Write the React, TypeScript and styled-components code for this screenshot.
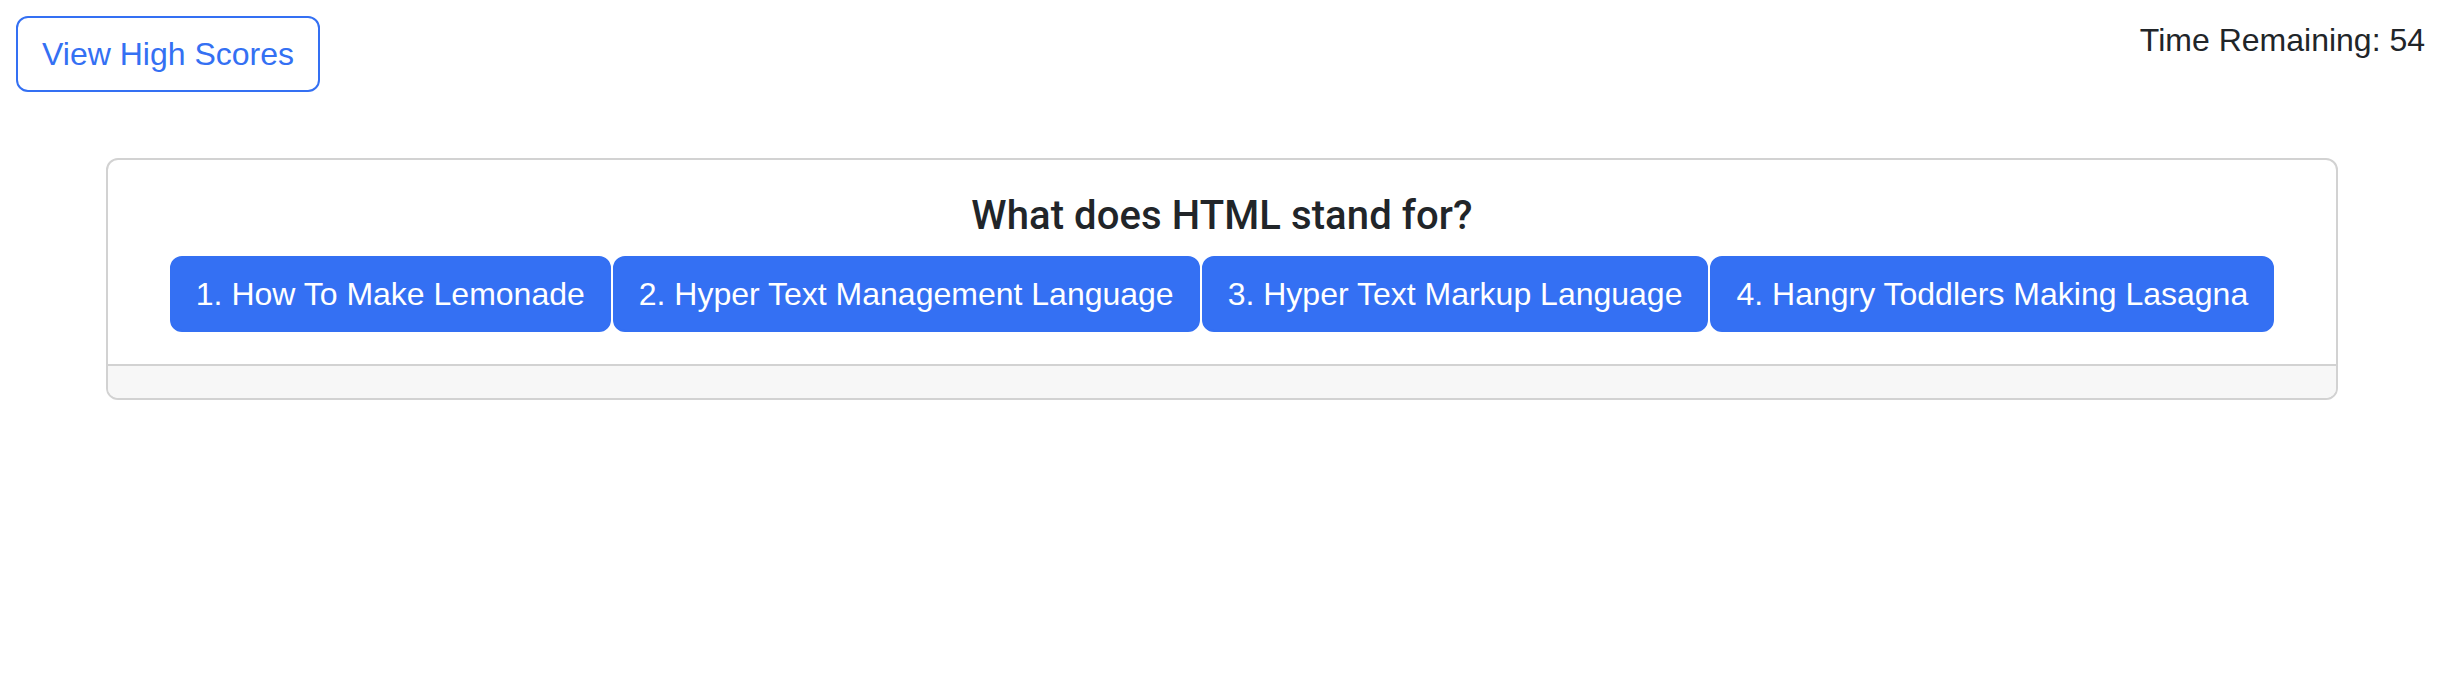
import React from "react";
import styled, { createGlobalStyle } from "styled-components";

const GlobalStyle = createGlobalStyle`
  html, body {
    margin: 0;
    padding: 0;
    background: #ffffff;
  }
  body {
    font-family: "Liberation Sans", Arial, sans-serif;
    color: #212529;
  }
  * { box-sizing: border-box; }
`;

const Page = styled.div`
  width: 2448px;
  min-height: 694px;
  background: #ffffff;
`;

const Header = styled.header`
  display: flex;
  justify-content: space-between;
  align-items: flex-start;
  padding: 16px 23px 0 16px;
`;

const OutlineButton = styled.button`
  font-family: "Liberation Sans", Arial, sans-serif;
  font-size: 32px;
  line-height: 48px;
  padding: 12px 24px;
  border: 2px solid #3470f3;
  border-radius: 12px;
  background: #ffffff;
  color: #3470f3;
  cursor: pointer;
`;

const Timer = styled.div`
  font-size: 32px;
  line-height: 48px;
  color: #212529;
`;

const Card = styled.section`
  margin: 66px 110px 0 106px;
  border: 2px solid #d2d2d2;
  border-radius: 12px;
  overflow: hidden;
  background: #ffffff;
`;

const CardBody = styled.div`
  padding: 32px;
  display: flex;
  flex-direction: column;
  align-items: center;
`;

const Question = styled.h5`
  margin: 0 0 16px;
  font-family: Roboto, "Liberation Sans", Arial, sans-serif;
  font-size: 40px;
  line-height: 48px;
  font-weight: 500;
  letter-spacing: 0.1px;
  color: #212529;
`;

const Choices = styled.div`
  display: flex;
  justify-content: center;
  gap: 2px;
`;

const ChoiceButton = styled.button`
  font-family: "Liberation Sans", Arial, sans-serif;
  font-size: 32px;
  line-height: 48px;
  padding: 12px 24px;
  border: 2px solid #3470f3;
  border-radius: 12px;
  background: #3470f3;
  color: #ffffff;
  white-space: nowrap;
  cursor: pointer;
`;

const CardFooter = styled.div`
  height: 34px;
  border-top: 2px solid #d2d2d2;
  background: #f7f7f7;
`;

const choices = [
  "1. How To Make Lemonade",
  "2. Hyper Text Management Language",
  "3. Hyper Text Markup Language",
  "4. Hangry Toddlers Making Lasagna",
];

export default function App() {
  return (
    <Page>
      <GlobalStyle />
      <Header>
        <OutlineButton>View High Scores</OutlineButton>
        <Timer>Time Remaining: 54</Timer>
      </Header>
      <Card>
        <CardBody>
          <Question>What does HTML stand for?</Question>
          <Choices>
            {choices.map((c) => (
              <ChoiceButton key={c}>{c}</ChoiceButton>
            ))}
          </Choices>
        </CardBody>
        <CardFooter />
      </Card>
    </Page>
  );
}
